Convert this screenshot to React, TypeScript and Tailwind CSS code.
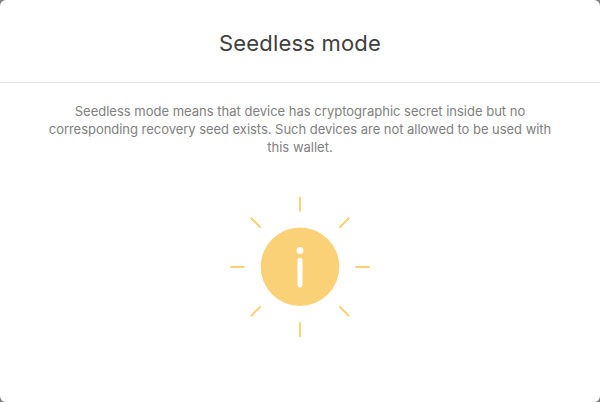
import React from "react";

function SunInfo() {
  return (
    <svg width="140" height="140" viewBox="0 0 140 140" className="block">
      <circle cx="70" cy="69.8" r="39.3" fill="#fad177" />
      <g stroke="#fad177" strokeWidth="2">
        <path d="M70 0V14.5M70 125.2V140M0 70H14.5M125.2 70H140M20.7 20.7L30.7 30.7M109.3 109.3L119.3 119.3M20.7 119.3L30.7 109.3M109.3 30.7L119.3 20.7" />
      </g>
      <circle cx="70" cy="53.6" r="3.5" fill="#fff" />
      <path d="M70 63.3V88" stroke="#fff" strokeWidth="5" strokeLinecap="round" />
    </svg>
  );
}

export default function App() {
  return (
    <div className="h-[402px] w-[600px] bg-[#7f7f7f] font-['Inter',sans-serif]">
      <main className="flex h-full flex-col items-center rounded-md bg-white">
        <header className="flex h-[83px] w-full items-center justify-center border-b border-[#e3e3e3] pt-1">
          <h1 className="text-[22px] leading-8 tracking-[0.2px] text-[#404040]">Seedless mode</h1>
        </header>
        <p className="mt-[19px] text-center text-[13px] leading-[18px] whitespace-nowrap text-[#808080]">
          <span className="block">Seedless mode means that device has cryptographic secret inside but no</span>
          <span className="block tracking-[-0.035px]">corresponding recovery seed exists. Such devices are not allowed to be used with</span>
          <span className="block">this wallet.</span>
        </p>
        <div className="mt-[41px]">
          <SunInfo />
        </div>
      </main>
    </div>
  );
}
